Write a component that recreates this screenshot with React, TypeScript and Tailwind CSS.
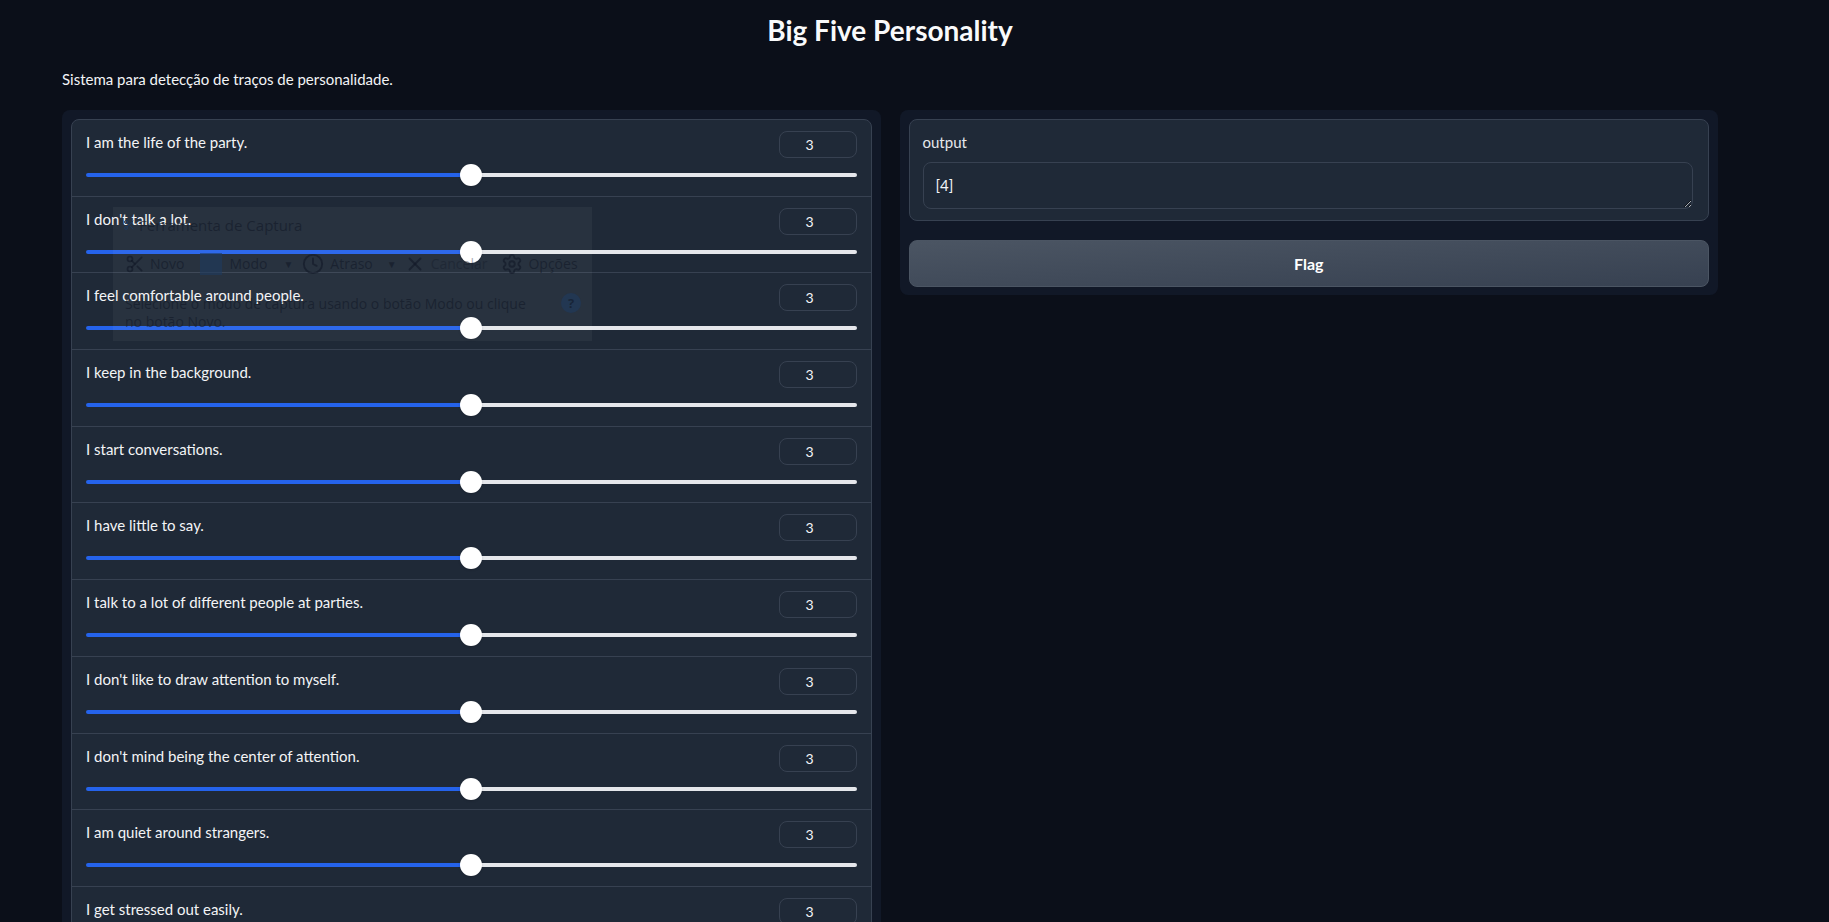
import { Scissors, Clock, X, Settings } from "lucide-react"

const questions = [
  "I am the life of the party.",
  "I don't talk a lot.",
  "I feel comfortable around people.",
  "I keep in the background.",
  "I start conversations.",
  "I have little to say.",
  "I talk to a lot of different people at parties.",
  "I don't like to draw attention to myself.",
  "I don't mind being the center of attention.",
  "I am quiet around strangers.",
  "I get stressed out easily.",
  "I am relaxed most of the time.",
  "I worry about things.",
]

const SliderRow = ({ label, value }: { label: string; value: number }) => {
  const pct = ((value - 1) / 4) * 100
  return (
    <div className="h-[76.7px] border-b border-[#374151] px-[14px] pt-[11px] last:border-b-0">
      <div className="flex items-start justify-between">
        <span className="pt-[1px] text-[15px] leading-5 text-[#f3f4f6]">{label}</span>
        <div className="flex h-[27px] w-[78px] items-center justify-center rounded-[8px] border border-[#374151] pr-[16px] text-[14px] text-[#f3f4f6]">
          {value}
        </div>
      </div>
      <div className="relative mt-[6px] flex h-[22px] items-center">
        <div className="h-[4px] rounded-l-full bg-[#2563eb]" style={{ width: `${pct}%` }} />
        <div className="h-[4px] flex-1 rounded-r-full bg-[#e5e7eb]" />
        <div
          className="absolute top-0 h-[22px] w-[22px] -translate-x-1/2 rounded-full bg-white shadow"
          style={{ left: `${pct}%` }}
        />
      </div>
    </div>
  )
}

const GhostSnip = () => (
  <div className="pointer-events-none absolute left-[113px] top-[207px] h-[134px] w-[479px] bg-white/[0.045] font-['Open_Sans',sans-serif] text-[#111827]/60">
    <div className="flex items-center gap-[4px] pl-[10px] pt-[8px] text-[15px] leading-5">
      <Scissors size={12} className="text-[#1e3a5f]" />
      <span>Ferramenta de Captura</span>
    </div>
    <div className="mt-[18px] flex items-center pl-[12px] text-[14px] leading-5">
      <Scissors size={20} className="mr-[5px]" />
      <span>Novo</span>
      <div className="ml-[16px] mr-[7px] h-[22px] w-[22px] bg-[#1e3a5f]/60" />
      <span>Modo</span>
      <span className="ml-[16px] text-[10px]">▼</span>
      <Clock size={22} className="ml-[9px] mr-[6px]" />
      <span>Atraso</span>
      <span className="ml-[14px] text-[10px]">▼</span>
      <X size={22} className="ml-[7px] mr-[5px]" />
      <span className="opacity-60">Cancelar</span>
      <Settings size={22} className="ml-[14px] mr-[5px]" />
      <span>Opções</span>
    </div>
    <div className="mt-[20px] flex items-start justify-between pl-[12px] pr-[11px] text-[14px] leading-[18px]">
      <div>
        <div>Selecione o modo de captura usando o botão Modo ou clique</div>
        <div>no botão Novo.</div>
      </div>
      <div className="mt-[-2px] flex h-[20px] w-[20px] items-center justify-center rounded-full bg-[#1e3a5f]/60 text-[13px] font-bold">
        ?
      </div>
    </div>
  </div>
)

const App = () => {
  return (
    <div className="relative min-h-screen overflow-hidden bg-[#0b0f19] font-['Lato',sans-serif] text-white">
      <div className="ml-[62px] w-[1656px]">
        <h1 className="pt-[13px] text-center text-[28px] font-bold leading-[34px] text-[#f9fafb]">
          Big Five Personality
        </h1>
        <p className="mt-[22px] text-[15px] leading-5 text-[#f3f4f6]">
          Sistema para detecção de traços de personalidade.
        </p>
        <div className="mt-[21px] flex items-start gap-[19px]">
          <div className="flex-1 rounded-[8px] bg-[#111827] p-[9px]">
            <div className="rounded-[8px] border border-[#374151] bg-[#1f2937]">
              {questions.map((q, i) => (
                <SliderRow key={i} label={q} value={3} />
              ))}
            </div>
          </div>
          <div className="flex flex-1 flex-col gap-[19px] rounded-[8px] bg-[#111827] p-[9px] pb-[8px]">
            <div className="rounded-[8px] border border-[#374151] bg-[#1f2937] pb-[11px] pl-[13px] pr-[15px] pt-[12px]">
              <div className="text-[15px] leading-5 text-[#e5e7eb]">output</div>
              <textarea
                readOnly
                value="[4]"
                className="mt-[10px] block h-[47px] w-full rounded-[8px] border border-[#374151] bg-[#1f2937] px-[12px] py-[12px] text-[15px] leading-5 text-[#f3f4f6] outline-none"
              />
            </div>
            <button className="h-[47px] w-full rounded-[8px] border border-[#4b5563] bg-gradient-to-br from-[#4b5563] to-[#374151] text-[16px] font-bold text-white">
              Flag
            </button>
          </div>
        </div>
      </div>
      <GhostSnip />
    </div>
  )
}

export default App
